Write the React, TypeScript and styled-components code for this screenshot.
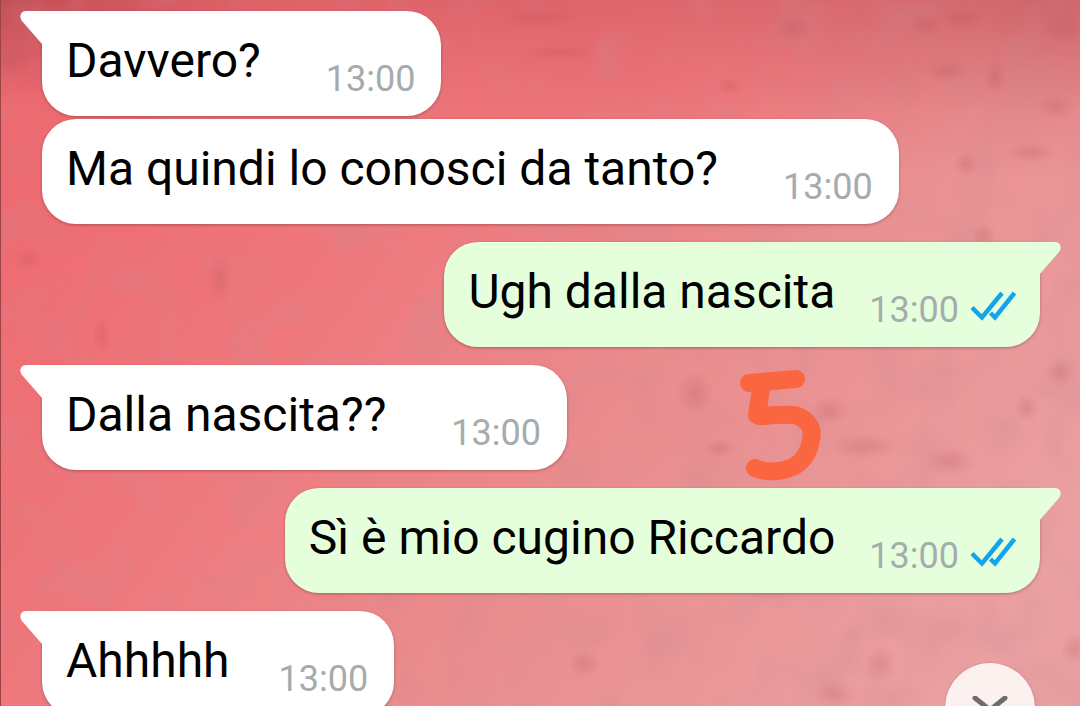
import React from "react";
import styled, { createGlobalStyle, css } from "styled-components";

const GlobalStyle = createGlobalStyle`
  *, *::before, *::after { box-sizing: border-box; }
  html, body, #root { height: 100%; }
  body { margin: 0; overflow: hidden; font-family: Roboto, sans-serif; }
`;

const Screen = styled.div`
  position: relative;
  min-height: 100%;
  overflow: hidden;
  background: #e87a7e;
`;

const Wallpaper = styled.svg`
  position: absolute;
  inset: 0;
  width: 100%;
  height: 100%;
`;

const Thread = styled.main`
  position: relative;
  display: flex;
  flex-direction: column;
  gap: 18px;
  padding: 11px 40px 0 42px;
`;

const Group = styled.section<{ $out?: boolean }>`
  display: flex;
  flex-direction: column;
  align-items: ${(p) => (p.$out ? "flex-end" : "flex-start")};
  gap: 3px;
`;

const Bubble = styled.article<{ $out?: boolean; $tail?: boolean; $short?: boolean }>`
  position: relative;
  display: flex;
  align-items: flex-end;
  gap: ${(p) => (p.$out ? "34px" : p.$short ? "49px" : "65px")};
  padding: 22px ${(p) => (p.$out ? "24px" : "26px")} 16px 24px;
  border-radius: 34px;
  background: ${(p) => (p.$out ? "#e5ffdc" : "#ffffff")};
  box-shadow: 0 1px 3px rgba(70, 20, 25, 0.35);
  ${(p) =>
    p.$tail &&
    (p.$out
      ? css`border-top-right-radius: 0;`
      : css`border-top-left-radius: 0;`)}
`;

const Tail = styled.svg<{ $out?: boolean }>`
  position: absolute;
  top: 0;
  ${(p) => (p.$out ? "right: -21px; transform: scaleX(-1);" : "left: -22px;")}
  width: 24px;
  height: 34px;
`;

const Message = styled.p`
  margin: 0;
  padding-bottom: 11px;
  font-size: 48px;
  line-height: 56px;
  color: #000;
  white-space: nowrap;
`;

const Meta = styled.div`
  display: flex;
  align-items: center;
  gap: 12px;
`;

const Time = styled.time`
  font-size: 36px;
  line-height: 42px;
  color: #a6abad;
`;

const Ticks = styled.svg`
  width: 45px;
  height: 30px;
  margin-bottom: 8px;
`;

const Doodle = styled.svg`
  position: absolute;
  top: 369px;
  right: 258px;
  width: 84px;
  height: 112px;
`;

const ScrollButton = styled.button`
  position: absolute;
  top: 663px;
  right: 45px;
  display: flex;
  align-items: center;
  justify-content: center;
  width: 90px;
  height: 90px;
  padding: 0;
  border: 0;
  border-radius: 50%;
  background: #fdf1f0;
  box-shadow: 0 0 2px rgba(90, 30, 35, 0.3);
`;

type Msg = { text: string; time: string; short?: boolean };
const groups: { out?: boolean; messages: Msg[] }[] = [
  {
    messages: [
      { text: "Davvero?", time: "13:00" },
      { text: "Ma quindi lo conosci da tanto?", time: "13:00" },
    ],
  },
  { out: true, messages: [{ text: "Ugh dalla nascita", time: "13:00" }] },
  { messages: [{ text: "Dalla nascita??", time: "13:00" }] },
  { out: true, messages: [{ text: "Sì è mio cugino Riccardo", time: "13:00" }] },
  { messages: [{ text: "Ahhhhh", time: "13:00", short: true }] },
];

// Dark flecks of the wallpaper: x, y, horizontal and vertical radius
const flecks = [
  [793, 27, 12, 8], [925, 24, 10, 8], [730, 85, 9, 6], [948, 70, 14, 7],
  [1056, 105, 12, 8], [995, 76, 7, 12], [1030, 150, 16, 6], [966, 162, 8, 8],
  [560, 52, 24, 5], [540, 18, 26, 6], [984, 232, 8, 8], [28, 256, 9, 6],
  [1065, 28, 16, 10], [963, 18, 14, 7], [695, 388, 12, 14], [1060, 368, 9, 9],
  [1027, 402, 8, 9], [950, 455, 16, 9], [830, 405, 12, 9], [865, 440, 22, 8],
  [584, 655, 10, 9], [835, 685, 14, 9], [880, 655, 10, 12], [1075, 640, 9, 10],
  [720, 442, 10, 6], [102, 330, 6, 12], [10, 60, 14, 12], [220, 275, 8, 16],
];

function Backdrop() {
  return (
    <Wallpaper viewBox="0 0 1080 706" preserveAspectRatio="none" aria-hidden="true">
      <defs>
        <linearGradient id="base" x1="0" y1="0.25" x2="1" y2="0.75">
          <stop offset="0" stopColor="#ed6a70" />
          <stop offset="0.3" stopColor="#ef787c" />
          <stop offset="0.62" stopColor="#ea8e8f" />
          <stop offset="1" stopColor="#eaa0a2" />
        </linearGradient>
        <linearGradient id="shade" x1="0" y1="0" x2="0" y2="1">
          <stop offset="0" stopColor="#c04a52" stopOpacity="0.35" />
          <stop offset="1" stopColor="#d05860" stopOpacity="0" />
        </linearGradient>
        <radialGradient id="corner">
          <stop offset="0" stopColor="#b8484e" stopOpacity="0.8" />
          <stop offset="1" stopColor="#c9525a" stopOpacity="0" />
        </radialGradient>
        <radialGradient id="glow">
          <stop offset="0" stopColor="#ec6e73" stopOpacity="0.8" />
          <stop offset="1" stopColor="#ee6c72" stopOpacity="0" />
        </radialGradient>
        <radialGradient id="fleck">
          <stop offset="0" stopColor="#b04850" stopOpacity="0.22" />
          <stop offset="1" stopColor="#b04850" stopOpacity="0" />
        </radialGradient>
        <filter id="mottle" x="0" y="0" width="1" height="1">
          <feTurbulence type="fractalNoise" baseFrequency="0.022 0.02" numOctaves="2" seed="8" />
          <feColorMatrix values="0 0 0 0 0.6  0 0 0 0 0.25  0 0 0 0 0.28  1.4 0 0 0 -0.62" />
        </filter>
      </defs>
      <rect width="1080" height="706" fill="url(#base)" />
      <ellipse cx="600" cy="70" rx="380" ry="200" fill="url(#glow)" />
      <rect width="1080" height="110" fill="url(#shade)" />
      <ellipse cx="0" cy="0" rx="260" ry="100" fill="url(#corner)" />
      <ellipse cx="1080" cy="0" rx="420" ry="180" fill="url(#corner)" opacity="0.5" />
      <rect width="1080" height="706" filter="url(#mottle)" opacity="0.5" />
      {flecks.map(([x, y, rx, ry]) => (
        <ellipse key={`${x}-${y}`} cx={x} cy={y} rx={rx * 1.6} ry={ry * 1.6} fill="url(#fleck)" />
      ))}
      <rect width="1" height="706" fill="#9b4348" />
    </Wallpaper>
  );
}

export default function App() {
  return (
    <Screen>
      <GlobalStyle />
      <Backdrop />
      <Thread>
        {groups.map((g, gi) => (
          <Group key={gi} $out={g.out}>
            {g.messages.map((m, i) => (
              <Bubble key={m.text} $out={g.out} $tail={i === 0} $short={m.short}>
                {i === 0 && (
                  <Tail $out={g.out} viewBox="0 0 24 34" aria-hidden="true">
                    <path
                      d="M24 0H6C2.200 0 .4 2.800 .4 5.500C.4 7 1 8.700 2 10L22 33H24Z"
                      fill={g.out ? "#e5ffdc" : "#ffffff"}
                    />
                  </Tail>
                )}
                <Message>{m.text}</Message>
                <Meta>
                  <Time>{m.time}</Time>
                  {g.out && (
                    <Ticks viewBox="0 0 45 30" role="img" aria-label="Read">
                      <g fill="none" stroke="#12a5ec" strokeWidth="4.500">
                        <path d="M1 16.500L11 26.500L31 2" />
                        <path d="M19.500 22L24 26.500L43.500 2" />
                      </g>
                    </Ticks>
                  )}
                </Meta>
              </Bubble>
            ))}
          </Group>
        ))}
      </Thread>
      <Doodle viewBox="738 369 84 112" aria-hidden="true">
        <path
          d="M749 383L796 379M762 383L757 415Q759 417 764 416L775 415C786 415 795 413 802 418C811 424 813 431 811 440C809 454 800 465 790 468C780 472 765 473 755 468"
          fill="none"
          stroke="#fa6640"
          strokeWidth="18"
          strokeLinecap="round"
          strokeLinejoin="round"
        />
      </Doodle>
      <ScrollButton type="button" aria-label="Scroll to latest">
        <svg width="40" height="24" viewBox="0 0 40 24" aria-hidden="true">
          <path
            d="M5 2L20 14L35 2"
            fill="none"
            stroke="#6e6c6c"
            strokeWidth="5"
            strokeLinecap="round"
          />
        </svg>
      </ScrollButton>
    </Screen>
  );
}
